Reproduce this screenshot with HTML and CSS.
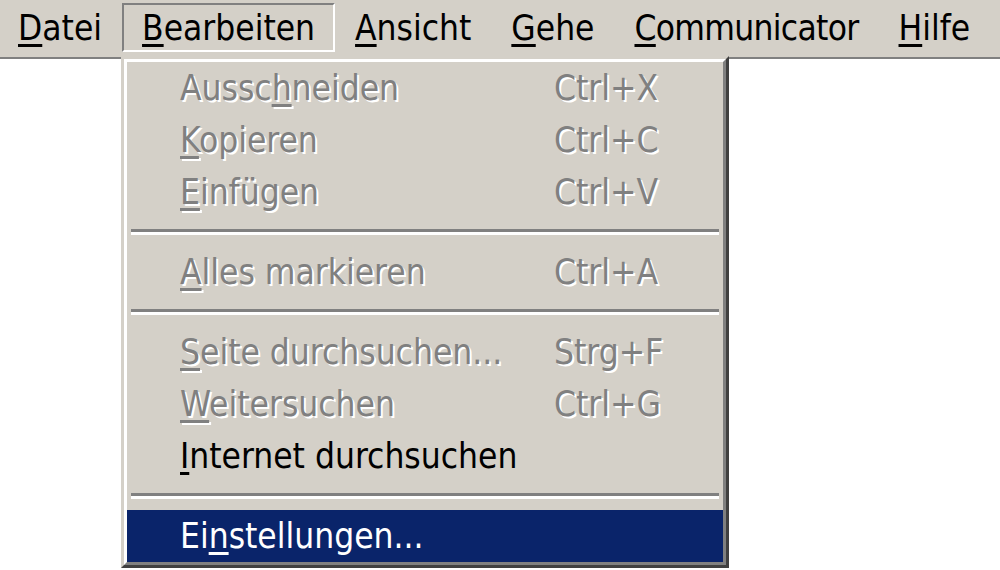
FILE: index.html
```html
<!DOCTYPE html>
<html lang="de">
<head>
<meta charset="utf-8">
<title>Bearbeiten-Menü</title>
<link rel="stylesheet" href="styles.css">
</head>
<body>
<div class="menubar">
  <div class="bar-item"><u>D</u>atei</div>
  <div class="bar-item open"><u>B</u>earbeiten</div>
  <div class="bar-item"><u>A</u>nsicht</div>
  <div class="bar-item"><u>G</u>ehe</div>
  <div class="bar-item tight"><u>C</u>ommunicator</div>
  <div class="bar-item"><u>H</u>ilfe</div>
</div>
<div class="menu">
  <div class="menu-inner">
    <div class="item disabled"><span class="label">Aussc<u>h</u>neiden</span><span class="key">Ctrl+X</span></div>
    <div class="item disabled"><span class="label"><u>K</u>opieren</span><span class="key">Ctrl+C</span></div>
    <div class="item disabled"><span class="label"><u>E</u>infügen</span><span class="key">Ctrl+V</span></div>
    <div class="sep"></div>
    <div class="item disabled"><span class="label"><u>A</u>lles markieren</span><span class="key">Ctrl+A</span></div>
    <div class="sep"></div>
    <div class="item disabled"><span class="label"><u>S</u>eite durchsuchen...</span><span class="key">Strg+F</span></div>
    <div class="item disabled"><span class="label"><u>W</u>eitersuchen</span><span class="key">Ctrl+G</span></div>
    <div class="item"><span class="label"><u>I</u>nternet durchsuchen</span><span class="key"></span></div>
    <div class="sep"></div>
    <div class="item active"><span class="label">Ei<u>n</u>stellungen...</span><span class="key"></span></div>
  </div>
</div>
</body>
</html>
```

FILE: styles.css
```css
html, body {
  margin: 0;
  padding: 0;
  background: #ffffff;
}

body {
  width: 1000px;
  height: 570px;
  overflow: hidden;
  font-family: "DejaVu Sans Condensed", "DejaVu Sans", sans-serif;
  font-stretch: condensed;
  font-size: 35px;
  color: #000000;
}

u {
  text-decoration-thickness: 3px;
  text-underline-offset: 4px;
}

.menubar {
  display: flex;
  height: 59px;
  background: #d4d0c8;
  border-bottom: 2px solid #808080;
  box-sizing: border-box;
}

.bar-item {
  margin-top: 3px;
  height: 49px;
  line-height: 47px;
  padding: 0 18px;
  box-sizing: border-box;
  border: 2px solid transparent;
  white-space: nowrap;
}

.bar-item:first-child {
  padding-left: 16px;
}

.bar-item.tight {
  letter-spacing: -0.7px;
}

.bar-item.open {
  border-color: #808080 #ffffff #ffffff #808080;
}

.menu {
  position: absolute;
  left: 121px;
  top: 56px;
  width: 608px;
  height: 512px;
  box-sizing: border-box;
  border: 3px solid;
  border-color: #d4d0c8 #404040 #404040 #d4d0c8;
  background: #d4d0c8;
}

.menu-inner {
  height: 100%;
  box-sizing: border-box;
  border: 3px solid;
  border-color: #ffffff #808080 #808080 #ffffff;
  display: flex;
  flex-direction: column;
}

.item {
  display: grid;
  grid-template-columns: 374px auto;
  height: 52px;
  line-height: 52px;
  padding-left: 53px;
  white-space: nowrap;
}

.item.disabled {
  color: #808080;
  text-shadow: 2px 2px 0 #ffffff;
}

.item.active {
  background: #0a246a;
  color: #ffffff;
}

.sep {
  height: 28px;
  display: flex;
  flex-direction: column;
  justify-content: center;
  padding: 0 4px;
}

.sep::before {
  content: "";
  display: block;
  height: 3px;
  background: #808080;
  border-bottom: 3px solid #ffffff;
}
```
